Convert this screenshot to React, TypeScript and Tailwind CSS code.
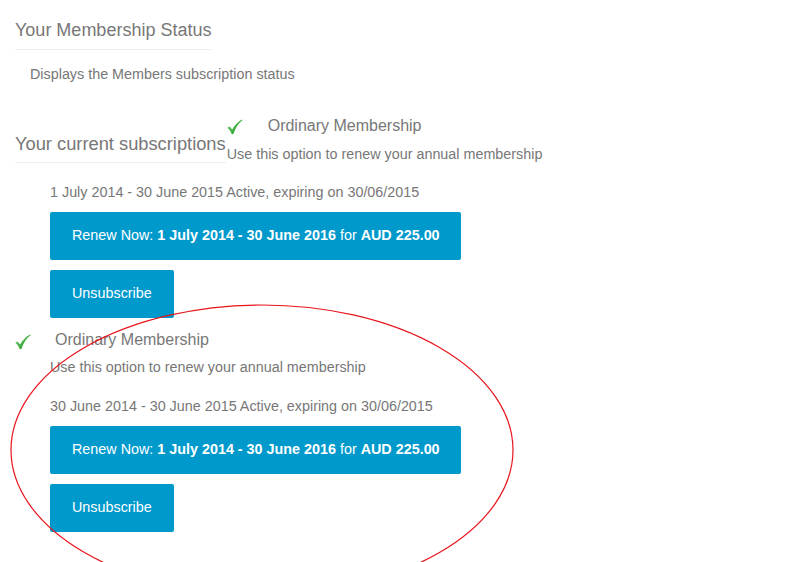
import React from "react";

const font = { fontFamily: '"Liberation Sans", Arial, sans-serif' };

function Tick({ className = "" }: { className?: string }) {
  return (
    <svg width="16" height="16" viewBox="0 0 16 16" className={className}>
      <defs>
        <linearGradient id="tk" x1="0" y1="0" x2="1" y2="1">
          <stop offset="0" stopColor="#6fd46f" />
          <stop offset="1" stopColor="#1f8f1f" />
        </linearGradient>
      </defs>
      <path
        d="M0.3 8.8 L2.6 7.4 L5.2 10.4 C7.4 6.4 10.5 3 15 0.5 L15.5 1.3 C11.6 4.3 8.6 8.6 6.4 14.9 L4.8 15.2 C3.7 12.6 2.3 10.5 0.3 8.8 Z"
        fill="url(#tk)"
      />
    </svg>
  );
}

function Buttons() {
  return (
    <div className="flex flex-col items-start gap-[10px] mt-[10px]">
      <button className="h-12 pl-[22px] pr-[10px] bg-[#0099cc] text-white text-[14.35px] rounded-[2px] w-[411px] text-left whitespace-nowrap">
        Renew Now: <b>1 July 2014 - 30 June 2016</b> for <b>AUD 225.00</b>
      </button>
      <button className="h-12 px-[22px] bg-[#0099cc] text-white text-[14.35px] rounded-[2px] whitespace-nowrap">
        Unsubscribe
      </button>
    </div>
  );
}

export default function App() {
  return (
    <div className="relative w-[802px] h-[562px] overflow-hidden bg-white text-[#777]" style={font}>
      <div className="pl-[15px] pt-[19px]">
        <h3 className="inline-block text-[18px] leading-[20px] pb-[9px] border-b border-[#eee]">
          Your Membership Status
        </h3>
        <p className="pl-[15px] mt-[14px] text-[14.35px] leading-[20px]">
          Displays the Members subscription status
        </p>

        <div className="flex items-start mt-[32px]">
          <h3 className="mt-[18px] text-[18.3px] leading-[20px] pb-[8px] border-b border-[#eee]">
            Your current subscriptions
          </h3>
          <div className="ml-[1px]">
            <div className="flex items-center h-5">
              <Tick className="mt-[1px]" />
              <span className="ml-[25px] text-[16px] leading-[20px]">Ordinary Membership</span>
            </div>
            <p className="mt-[8px] text-[14.35px] leading-[20px]">
              Use this option to renew your annual membership
            </p>
          </div>
        </div>

        <div className="pl-[35px]">
          <p className="mt-[18px] text-[14.35px] leading-[20px]">
            1 July 2014 - 30 June 2015 Active, expiring on 30/06/2015
          </p>
          <Buttons />
        </div>

        <div className="mt-[12px] flex items-center h-5">
          <Tick className="mt-[4px]" />
          <span className="ml-[24px] text-[16px] leading-[20px]">Ordinary Membership</span>
        </div>
        <div className="pl-[35px]">
          <p className="mt-[7px] text-[14.35px] leading-[20px]">
            Use this option to renew your annual membership
          </p>
          <p className="mt-[19px] text-[14.35px] leading-[20px]">
            30 June 2014 - 30 June 2015 Active, expiring on 30/06/2015
          </p>
          <Buttons />
        </div>
      </div>

      <svg className="absolute left-0 top-0 pointer-events-none" width="802" height="562">
        <ellipse cx="262" cy="450" rx="251" ry="145" fill="none" stroke="#e8141c" strokeWidth="1.2" />
      </svg>
    </div>
  );
}
